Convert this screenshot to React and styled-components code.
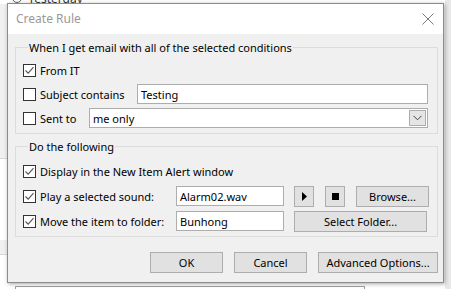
import React from "react";
import styled, { createGlobalStyle } from "styled-components";

const Global = createGlobalStyle`
  html, body { margin: 0; padding: 0; }
  body {
    background: #ffffff;
    font-family: "Segoe UI", "Noto Sans", "Liberation Sans", sans-serif;
    font-size: 11px;
    color: #000;
  }
`;

function Check({ checked }) {
  return (
    <Box>
      {checked && (
        <svg width="11" height="11" viewBox="0 0 11 11">
          <path d="M1.5 5.5 L4.2 8.2 L9.5 2.2" fill="none" stroke="#555" strokeWidth="1.1" />
        </svg>
      )}
    </Box>
  );
}

function Option({ checked, width, children }) {
  return (
    <OptLabel $width={width}>
      <Check checked={checked} />
      <span>{children}</span>
    </OptLabel>
  );
}

export default function App() {
  return (
    <Desktop>
      <Global />
      <Backdrop>
        <TopStrip>
          <Chev />
          <span>Yesterday</span>
        </TopStrip>
        <SideStrip $top={4} $height={154} />
        <SideStrip $top={240} $height={14} />
        <RightStrip />
        <BehindBox />
      </Backdrop>

      <Dialog>
        <TitleBar>
          <Title>Create Rule</Title>
          <svg width="12" height="12" viewBox="0 0 12 12">
            <path d="M0.5 0.5 L11.5 11.5 M11.5 0.5 L0.5 11.5" stroke="#7a7a7a" strokeWidth="1" />
          </svg>
        </TitleBar>

        <Body>
          <Group>
            <Legend>When I get email with all of the selected conditions</Legend>
            <Rows $gap={4} $top={5}>
              <Row>
                <Option checked>From IT</Option>
              </Row>
              <Row>
                <Option width={114}>Subject contains</Option>
                <TextBox $width={291}>Testing</TextBox>
              </Row>
              <Row>
                <Option width={66}>Sent to</Option>
                <Combo>
                  <span>me only</span>
                  <ComboArrow>
                    <svg width="9" height="6" viewBox="0 0 9 6">
                      <path d="M0.5 0.8 L4.5 4.8 L8.5 0.8" fill="none" stroke="#444" strokeWidth="1" />
                    </svg>
                  </ComboArrow>
                </Combo>
              </Row>
            </Rows>
          </Group>

          <Group $mt={5}>
            <Legend>Do the following</Legend>
            <Rows $gap={5} $top={7}>
              <Row>
                <Option checked>Display in the New Item Alert window</Option>
              </Row>
              <Row>
                <Option checked width={153}>Play a selected sound:</Option>
                <TextBox $width={108}>Alarm02.wav</TextBox>
                <IconBtn $ml={10}>
                  <svg width="5" height="9" viewBox="0 0 5 9">
                    <path d="M0 0 L5 4.5 L0 9 Z" fill="#000" />
                  </svg>
                </IconBtn>
                <IconBtn $ml={11}>
                  <svg width="7" height="7" viewBox="0 0 7 7">
                    <rect width="7" height="7" fill="#000" />
                  </svg>
                </IconBtn>
                <Button $width={73} $ml={11}>Browse...</Button>
              </Row>
              <Row>
                <Option checked width={153}>Move the item to folder:</Option>
                <TextBox $width={108}>Bunhong</TextBox>
                <Button $width={133} $ml={10}>Select Folder...</Button>
              </Row>
            </Rows>
          </Group>

          <Footer>
            <Button $width={73}>OK</Button>
            <Button $width={73}>Cancel</Button>
            <Button $width={120}>Advanced Options...</Button>
          </Footer>
        </Body>
      </Dialog>
    </Desktop>
  );
}

const Desktop = styled.div`
  position: relative;
  width: 451px;
  height: 289px;
  overflow: hidden;
  background: #ffffff;
`;

const Backdrop = styled.div`
  position: absolute;
  inset: 0;
`;

const TopStrip = styled.div`
  display: flex;
  align-items: center;
  gap: 6px;
  height: 12px;
  margin-top: -8px;
  padding-left: 12px;
  font-size: 12px;
  color: #333;
`;

const Chev = styled.div`
  width: 8px;
  height: 8px;
  border: 1px solid #666;
  border-radius: 50%;
`;

const SideStrip = styled.div`
  position: absolute;
  left: 0;
  top: ${(p) => p.$top}px;
  width: 8px;
  height: ${(p) => p.$height}px;
  background: #f0f0f0;
  border-bottom: 1px solid #d9d9d9;
`;

const RightStrip = styled.div`
  position: absolute;
  right: 0;
  top: 0;
  width: 6px;
  height: 289px;
  background: #e9e9e9;
`;

const BehindBox = styled.div`
  position: absolute;
  left: 15px;
  top: 286px;
  width: 348px;
  height: 10px;
  border: 1px solid #a0a0a0;
  background: #fff;
`;

const Dialog = styled.div`
  position: absolute;
  left: 7px;
  top: 3px;
  width: 435px;
  height: 278px;
  border: 1px solid #8c8c8c;
  box-shadow: 1px 1px 4px rgba(0, 0, 0, 0.35);
  background: #f0f0f0;
  display: flex;
  flex-direction: column;
`;

const TitleBar = styled.div`
  height: 29px;
  background: #ffffff;
  display: flex;
  align-items: center;
  justify-content: space-between;
  padding: 0 9px 1px 8px;
  flex-shrink: 0;
`;

const Title = styled.div`
  font-size: 12px;
  color: #999999;
`;

const Body = styled.div`
  flex: 1;
  display: flex;
  flex-direction: column;
  padding: 6px 5px 0 7px;
`;

const Group = styled.fieldset`
  margin: ${(p) => p.$mt || 0}px 0 0 0;
  padding: 0 8px 5px 7px;
  border: 1px solid #dcdcdc;
  min-width: 0;
`;

const Legend = styled.legend`
  padding: 0 1px;
  margin-left: 5px;
  font-size: 11px;
  line-height: 15px;
`;

const Rows = styled.div`
  display: flex;
  flex-direction: column;
  gap: ${(p) => p.$gap}px;
  margin-top: ${(p) => p.$top}px;
`;

const Row = styled.div`
  display: flex;
  align-items: center;
  height: 20px;
`;

const OptLabel = styled.label`
  display: flex;
  align-items: center;
  gap: 4px;
  width: ${(p) => (p.$width ? p.$width + "px" : "auto")};
  flex-shrink: 0;
  white-space: nowrap;
`;

const Box = styled.span`
  width: 11px;
  height: 11px;
  border: 1px solid #333;
  background: #fff;
  display: flex;
  align-items: center;
  justify-content: center;
`;

const TextBox = styled.div`
  box-sizing: border-box;
  width: ${(p) => p.$width}px;
  height: 20px;
  border: 1px solid #adadad;
  background: #fff;
  padding: 0 3px;
  display: flex;
  align-items: center;
  white-space: nowrap;
  overflow: hidden;
`;

const Combo = styled.div`
  box-sizing: border-box;
  width: 339px;
  height: 20px;
  border: 1px solid #adadad;
  background: #fff;
  padding: 0 1px 0 3px;
  display: flex;
  align-items: center;
  justify-content: space-between;
`;

const ComboArrow = styled.div`
  box-sizing: border-box;
  width: 17px;
  height: 16px;
  border: 1px solid #adadad;
  background: #e5e5e5;
  display: flex;
  align-items: center;
  justify-content: center;
`;

const Button = styled.div`
  box-sizing: border-box;
  width: ${(p) => p.$width}px;
  height: 21px;
  margin-left: ${(p) => p.$ml || 0}px;
  border: 1px solid #adadad;
  background: #e1e1e1;
  display: flex;
  align-items: center;
  justify-content: center;
  white-space: nowrap;
  flex-shrink: 0;
`;

const IconBtn = styled(Button)`
  width: 20px;
`;

const Footer = styled.div`
  display: flex;
  justify-content: flex-end;
  gap: 11px;
  margin-top: 15px;
  padding-right: 0;
`;
